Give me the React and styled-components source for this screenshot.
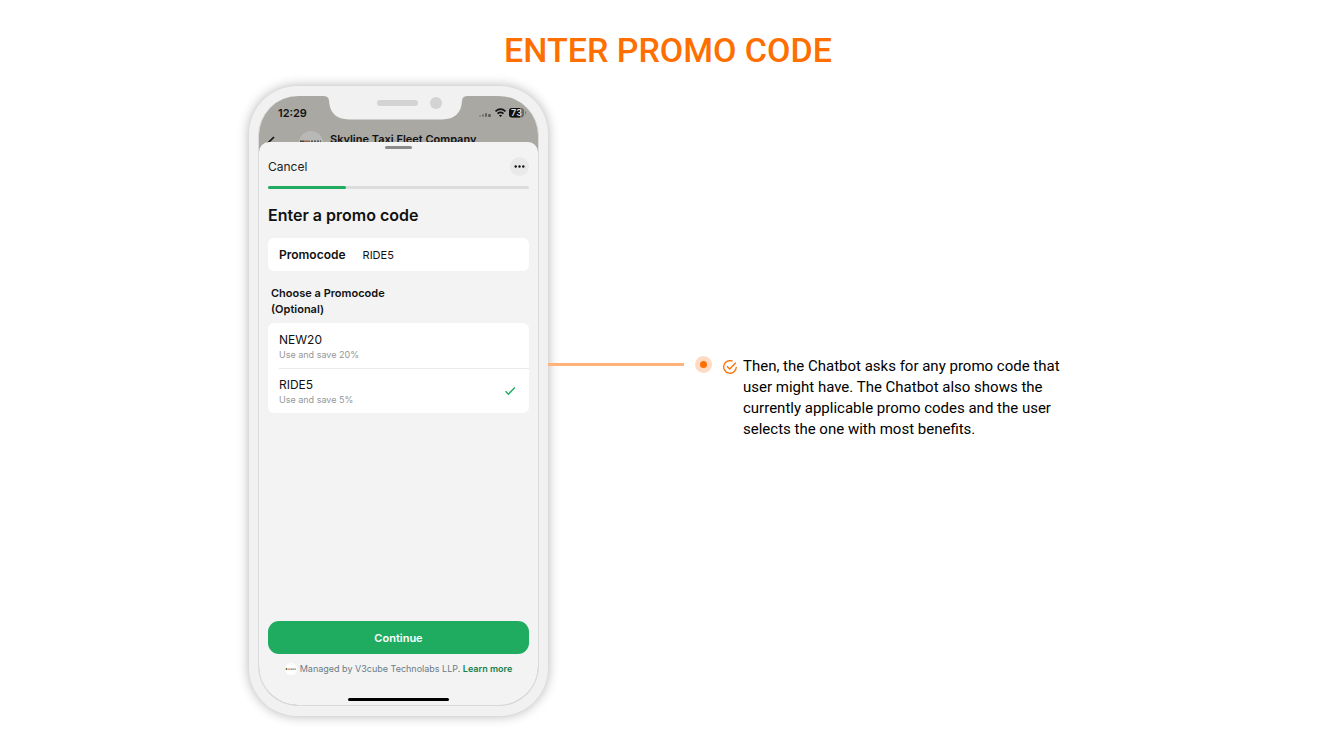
import React, { useState } from 'react';
import styled, { createGlobalStyle } from 'styled-components';

const GlobalStyle = createGlobalStyle`
  * {
    box-sizing: border-box;
  }

  body {
    margin: 0;
    background: #ffffff;
    color: #000000;
    font-family: Roboto, sans-serif;
  }
`;

const Page = styled.main`
  padding: 28px 20px 38px;
`;

const Heading = styled.h1`
  margin: 0 0 14px;
  color: #ff6f00;
  font-size: 34px;
  font-weight: 500;
  line-height: 44px;
  text-align: center;
  text-transform: uppercase;
`;

const Stage = styled.section`
  display: flex;
  max-width: 838px;
  margin: 0 auto;
`;

const Phone = styled.div`
  flex: 0 0 299px;
  min-width: 0;
  padding: 10px 9px;
  background: #f1f1f1;
  border-radius: 48px;
  box-shadow: 0 0 12px rgba(0, 0, 0, 0.3);
  color: #111111;
  font-family: Inter, sans-serif;
`;

const Screen = styled.div`
  position: relative;
  display: flex;
  flex-direction: column;
  min-height: 610px;
  overflow: hidden;
  background: #a9a8a3;
  border: 1px solid #dadadb;
  border-top: 0;
  border-radius: 40px;
`;

const Notch = styled.svg`
  position: absolute;
  top: 0;
  left: 64px;
`;

const StatusBar = styled.div`
  display: flex;
  align-items: center;
  justify-content: space-between;
  height: 34px;
  padding: 0 12px 0 19px;
  font-size: 11px;
  font-weight: 600;
`;

const ChatHeader = styled.div`
  display: flex;
  height: 18px;
  padding: 0 8px;
  font-size: 11px;
  font-weight: 600;
  line-height: 18px;
`;

const ChatAvatar = styled.svg`
  flex: none;
  margin: 0 7px 0 22px;
`;

const BackIcon = styled.svg`
  flex: none;
`;

const Sheet = styled.form`
  position: relative;
  display: flex;
  flex: 1;
  flex-direction: column;
  margin-top: -6px;
  padding: 4px 9px;
  background: #f3f3f3;
  border-radius: 10px 10px 0 0;
`;

const Grabber = styled.div`
  flex: none;
  width: 27px;
  height: 3px;
  margin: 0 auto;
  background: #8b8b8b;
  border-radius: 2px;
`;

const SheetBar = styled.div`
  display: flex;
  align-items: center;
  justify-content: space-between;
  margin-top: 8px;
`;

const CancelButton = styled.button`
  padding: 0;
  background: none;
  border: 0;
  color: #222222;
  font: 400 12px/18px Inter, sans-serif;
  cursor: pointer;
`;

const MoreButton = styled.button`
  display: flex;
  align-items: center;
  justify-content: center;
  width: 19px;
  height: 19px;
  padding: 0;
  background: #e9e9e9;
  border: 0;
  border-radius: 50%;
  cursor: pointer;
`;

const Track = styled.div`
  height: 3px;
  margin-top: 10px;
  background: #dcdcdc;
  border-radius: 2px;
`;

const Progress = styled.div`
  height: 100%;
  background: #1fac61;
  border-radius: 2px;
`;

const SheetTitle = styled.h2`
  margin: 15px 0 12px;
  font-size: 16px;
  font-weight: 600;
  line-height: 22px;
`;

const Card = styled.div`
  background: #ffffff;
  border-radius: 6px;
`;

const Field = styled(Card)`
  display: flex;
  align-items: center;
  gap: 17px;
  height: 33px;
  padding: 0 11px;
`;

const FieldLabel = styled.label`
  font-size: 12px;
  font-weight: 600;
`;

const FieldInput = styled.input`
  flex: 1;
  width: 0;
  min-width: 0;
  padding: 0;
  background: none;
  border: 0;
  outline: 0;
  color: #111111;
  font: 400 11px/16px Inter, sans-serif;
`;

const ListTitle = styled.h3`
  max-width: 140px;
  margin: 14px 0 6px 3px;
  font-size: 11px;
  font-weight: 600;
  line-height: 16px;
`;

const Option = styled.label`
  display: flex;
  align-items: center;
  justify-content: space-between;
  height: 45px;
  margin-left: 11px;
  padding-right: 13px;
  cursor: pointer;

  & + & {
    border-top: 1px solid #ebebeb;
  }
`;

const OptionRadio = styled.input`
  position: absolute;
  opacity: 0;
`;

const OptionCode = styled.div`
  margin-top: 1px;
  font-size: 12px;
  line-height: 16px;
`;

const OptionHint = styled.div`
  color: #969696;
  font-size: 9px;
  line-height: 13px;
`;

const ContinueButton = styled.button`
  height: 33px;
  margin-top: auto;
  background: #1fac61;
  border: 0;
  border-radius: 11px;
  color: #ffffff;
  font: 600 11px/16px Inter, sans-serif;
  cursor: pointer;
`;

const Managed = styled.div`
  display: flex;
  align-items: center;
  justify-content: center;
  gap: 3px;
  margin-top: 8px;
  color: #6d7b84;
  font-size: 9px;
  line-height: 14px;
  white-space: nowrap;
`;

const LearnMore = styled.a`
  color: #15804d;
  font-weight: 600;
  text-decoration: none;
`;

const HomeBar = styled.div`
  flex: none;
  width: 101px;
  height: 3px;
  margin: 22px auto 0;
  background: #000000;
  border-radius: 2px;
`;

const Callout = styled.div`
  display: flex;
  flex: 1;
  align-items: flex-start;
  margin-top: 270px;
`;

const Connector = styled.div`
  flex: 0 0 136px;
  height: 3px;
  margin-top: 7px;
  background: #ffb27a;
`;

const Dot = styled.div`
  flex: none;
  width: 17px;
  height: 17px;
  margin: 0 11px;
  background: #ff6f00;
  border: 5px solid #ffdbc3;
  border-radius: 50%;
`;

const CheckIcon = styled.svg`
  flex: none;
  margin: 4px 6px 0 0;
`;

const CalloutText = styled.p`
  flex: 1;
  margin: 0;
  font-size: 15px;
  line-height: 21px;
`;

const promoCodes = [
  { code: 'NEW20', hint: 'Use and save 20%' },
  { code: 'RIDE5', hint: 'Use and save 5%' }
];

const StatusIcons = () => (
  <svg width="47" height="12" viewBox="0 0 47 12" aria-hidden="true">
    <g fill="#62625f">
      <rect x="0" y="8" width="2" height="2" rx="1" fill="#858580" />
      <rect x="3" y="7" width="2" height="3" rx="1" fill="#777773" />
      <rect x="6" y="6" width="2" height="4" rx="1" />
      <rect x="9" y="7" width="3" height="3" rx="1" />
    </g>
    <g fill="none" stroke="#111" strokeWidth="1.6">
      <path d="M16.5 4.3Q21.5 0 26.5 4.3" />
      <path d="M18.5 6.6Q21.5 4.2 24.5 6.6" />
    </g>
    <path d="M19.9 8.3Q21.5 7 23.1 8.3L21.5 10z" fill="#111" />
    <rect x="30" y="1" width="15" height="9.5" rx="3" fill="#686864" />
    <path d="M33 1h8v9.5h-8a3 3 0 0 1-3-3V4a3 3 0 0 1 3-3z" fill="#111" />
    <path d="M46 4q1 .3 1 1.7T46 7.5z" fill="#777" />
    <text x="37.5" y="9" textAnchor="middle" fontSize="9" fontWeight="600" fontFamily="Inter, sans-serif" fill="#ddd">73</text>
  </svg>
);

const BrandMark = ({ size }) => (
  <svg width={size} height={size} viewBox="0 0 24 24" aria-hidden="true">
    <circle cx="12" cy="12" r="12" fill="#fff" />
    <circle cx="3" cy="12" r="1.8" fill="#55652e" />
    <path d="M5.5 12h6" stroke="#d98b62" strokeWidth="2.5" />
    <path d="M12 12h10" stroke="#777" strokeWidth="2.5" strokeDasharray="2 .5" />
  </svg>
);

const PromoSheet = () => {
  const [selected, setSelected] = useState('RIDE5');

  return (
    <Sheet onSubmit={(e) => e.preventDefault()}>
      <Grabber />
      <SheetBar>
        <CancelButton type="button">Cancel</CancelButton>
        <MoreButton type="button" aria-label="More options">
          <svg width="11" height="3" viewBox="0 0 11 3" fill="#111">
            <circle cx="1.7" cy="1.5" r="1.2" />
            <circle cx="5.5" cy="1.5" r="1.2" />
            <circle cx="9.3" cy="1.5" r="1.2" />
          </svg>
        </MoreButton>
      </SheetBar>
      <Track>
        <Progress style={{ width: '30%' }} />
      </Track>
      <SheetTitle>Enter a promo code</SheetTitle>
      <Field>
        <FieldLabel htmlFor="promocode">Promocode</FieldLabel>
        <FieldInput id="promocode" value={selected} onChange={(e) => setSelected(e.target.value)} />
      </Field>
      <ListTitle>Choose a Promocode (Optional)</ListTitle>
      <Card>
        {promoCodes.map(({ code, hint }) => (
          <Option key={code}>
            <div>
              <OptionCode>{code}</OptionCode>
              <OptionHint>{hint}</OptionHint>
            </div>
            <OptionRadio
              type="radio"
              name="promo"
              checked={selected === code}
              onChange={() => setSelected(code)}
            />
            {selected === code && (
              <svg width="12" height="10" viewBox="0 0 12 10" fill="none" aria-hidden="true">
                <path d="M1.5 5.3L4.4 8.2L10.8 1.5" stroke="#1fac61" strokeWidth="1.4" />
              </svg>
            )}
          </Option>
        ))}
      </Card>
      <ContinueButton type="submit">Continue</ContinueButton>
      <Managed>
        <BrandMark size={12} />
        <span>
          Managed by V3cube Technolabs LLP. <LearnMore href="#learn-more">Learn more</LearnMore>
        </span>
      </Managed>
      <HomeBar />
    </Sheet>
  );
};

const App = () => (
  <>
    <GlobalStyle />
    <Page>
      <Heading>Enter promo code</Heading>
      <Stage>
        <Phone>
          <Screen>
            <StatusBar>
              <span>12:29</span>
              <StatusIcons />
            </StatusBar>
            <ChatHeader>
              <BackIcon width="10" height="18" viewBox="0 0 10 18" fill="none" aria-hidden="true">
                <path d="M7 7L1 13L7 18" stroke="#111" strokeWidth="1.6" />
              </BackIcon>
              <ChatAvatar width="24" height="24" viewBox="0 0 24 24" aria-hidden="true">
                <circle cx="12" cy="13" r="12" fill="#b8b8b7" />
                <path d="M1 11.5h4" stroke="#454a35" strokeWidth="2" />
                <path d="M5 11.5h6" stroke="#9a6350" strokeWidth="2" />
                <path d="M12 11.5h10" stroke="#555" strokeWidth="2" strokeDasharray="2 1" />
              </ChatAvatar>
              <span>Skyline Taxi Fleet Company</span>
            </ChatHeader>
            <PromoSheet />
            <Notch width="146" height="24" viewBox="0 0 146 24" aria-hidden="true">
              <path d="M0 0Q6 0 6 5Q7 23 26 23.5H119Q138 23 139 5Q139 0 145 0Z" fill="#f1f1f1" />
              <rect x="54" y="4" width="41" height="6" rx="3" fill="#d3d3d3" />
              <circle cx="113" cy="7" r="6" fill="#d3d3d3" />
            </Notch>
          </Screen>
        </Phone>
        <Callout>
          <Connector />
          <Dot />
          <CheckIcon width="14" height="14" viewBox="0 0 14 14" fill="none" stroke="#ff6f00" strokeWidth="1.3" aria-hidden="true">
            <path d="M9.6 1.2A6.3 6.3 0 1 0 13.3 7" />
            <path d="M4 6.3L6.7 9L12.8 2.7" />
          </CheckIcon>
          <CalloutText>
            Then, the Chatbot asks for any promo code that user might have. The Chatbot also shows the
            currently applicable promo codes and the user selects the one with most benefits.
          </CalloutText>
        </Callout>
      </Stage>
    </Page>
  </>
);

export default App;
